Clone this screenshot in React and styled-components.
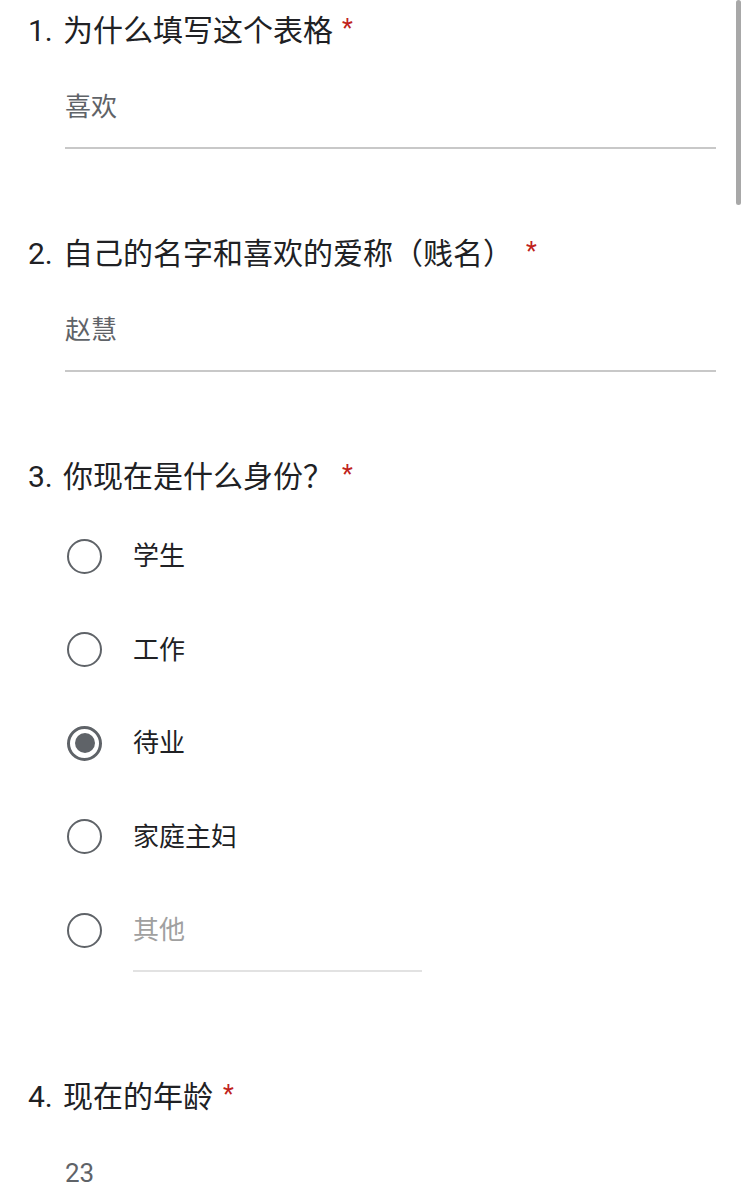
import React from "react";
import styled, { createGlobalStyle } from "styled-components";

const Global = createGlobalStyle`
  html, body { margin: 0; padding: 0; background: #ffffff; }
  body { font-family: Roboto, "Noto Sans CJK SC", sans-serif; }
  * { box-sizing: border-box; }
`;

const Page = styled.div`
  position: relative;
  padding: 11px 31px 40px 28px;
  width: 747px;
  min-height: 1200px;
  overflow: hidden;
`;

const ScrollThumb = styled.div`
  position: fixed;
  top: 0;
  right: 6px;
  width: 5px;
  height: 205px;
  border-radius: 3px;
  background: #a8a8a8;
`;

const Question = styled.section`
  margin-bottom: ${(p) => p.$after}px;
`;

const Title = styled.div`
  display: flex;
  align-items: baseline;
  font-size: 30px;
  line-height: 40px;
  color: #202124;
`;

const Num = styled.span`
  width: 35px;
  flex: none;
`;

const Star = styled.span`
  position: relative;
  top: -4px;
  color: #c0221c;
  font-size: 25px;
  margin-left: ${(p) => p.$gap}px;
`;

const Answer = styled.div`
  margin: 36px 0 0 37px;
  padding-bottom: 22px;
  border-bottom: 2px solid #c8c8c8;
  font-size: 26px;
  line-height: 36px;
  color: #5f6368;
`;

const Options = styled.div`
  display: flex;
  flex-direction: column;
  gap: 57.5px;
  margin: 39px 0 0 39px;
`;

const Option = styled.label`
  display: flex;
  align-items: flex-start;
`;

const Circle = styled.span`
  flex: none;
  width: 35px;
  height: 35px;
  margin-top: 0.5px;
  border-radius: 50%;
  border: ${(p) => (p.$checked ? "3px" : "2px")} solid #5f6368;
  display: flex;
  align-items: center;
  justify-content: center;
`;

const Dot = styled.span`
  width: 20px;
  height: 20px;
  border-radius: 50%;
  background: #5f6368;
`;

const Label = styled.span`
  margin-left: 31px;
  font-size: 26px;
  line-height: 36px;
  color: #202124;
`;

const OtherField = styled.span`
  margin-left: 31px;
  width: 289px;
  padding-bottom: 22px;
  border-bottom: 2px solid #e2e2e2;
  font-size: 26px;
  line-height: 36px;
  color: #a0a0a0;
`;

const options = [
  { label: "学生" },
  { label: "工作" },
  { label: "待业", checked: true },
  { label: "家庭主妇" },
];

export default function App() {
  return (
    <>
      <Global />
      <Page>
        <ScrollThumb />
        <Question $after={85}>
          <Title>
            <Num>1.</Num>
            <span>为什么填写这个表格</span>
            <Star $gap={9}>*</Star>
          </Title>
          <Answer>喜欢</Answer>
        </Question>

        <Question $after={85}>
          <Title>
            <Num>2.</Num>
            <span>自己的名字和喜欢的爱称（贱名）</span>
            <Star $gap={13}>*</Star>
          </Title>
          <Answer>赵慧</Answer>
        </Question>

        <Question $after={105}>
          <Title>
            <Num>3.</Num>
            <span>你现在是什么身份？</span>
            <Star $gap={9}>*</Star>
          </Title>
          <Options>
            {options.map((o) => (
              <Option key={o.label}>
                <Circle $checked={o.checked}>{o.checked && <Dot />}</Circle>
                <Label>{o.label}</Label>
              </Option>
            ))}
            <Option>
              <Circle />
              <OtherField>其他</OtherField>
            </Option>
          </Options>
        </Question>

        <Question $after={40}>
          <Title>
            <Num>4.</Num>
            <span>现在的年龄</span>
            <Star $gap={10}>*</Star>
          </Title>
          <Answer>23</Answer>
        </Question>
      </Page>
    </>
  );
}
